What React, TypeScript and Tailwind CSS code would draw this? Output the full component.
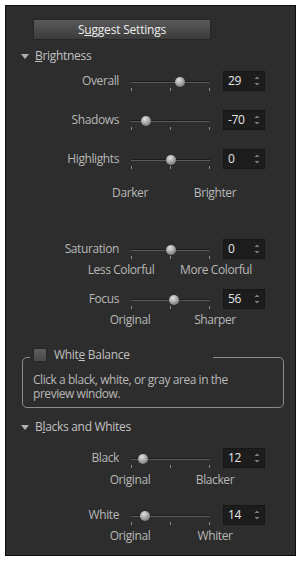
import React from 'react';

const font = { fontFamily: '"Open Sans", "Noto Sans", sans-serif' };

function Spinner() {
  return (
    <svg width="8" height="14" viewBox="0 0 8 14" className="shrink-0">
      <path d="M1.5 5 L4 2.5 L6.5 5 Z" fill="#808080" />
      <path d="M1.5 9 L4 11.5 L6.5 9 Z" fill="#808080" />
    </svg>
  );
}

function SliderRow({
  label,
  value,
  pos,
  className,
}: {
  label: string;
  value: string;
  pos: number;
  className?: string;
}) {
  return (
    <div className={`flex items-center h-[20px] ${className ?? ''}`}>
      <div className="w-[113px] text-right text-[12px] tracking-[-0.4px] text-[#b8b8b8] leading-[16px]">
        {label}
      </div>
      <div className="relative ml-[12px] w-[79px] h-[20px]">
        {/* track */}
        <div className="absolute left-0 right-0 top-[10px] h-[2px] bg-[#1c1c1c] border-b border-[#595959]" />
        {/* ticks */}
        <div className="absolute left-0 top-[17px] w-px h-[3px] bg-[#8a8a8a]" />
        <div className="absolute left-[39px] top-[17px] w-px h-[3px] bg-[#8a8a8a]" />
        <div className="absolute right-0 top-[17px] w-px h-[3px] bg-[#8a8a8a]" />
        {/* thumb */}
        <div
          className="absolute top-[6px] w-[10px] h-[10px] rounded-full bg-[radial-gradient(circle_at_40%_30%,#e2e2e2,#9a9a9a_55%,#5e5e5e)]"
          style={{ left: pos - 5 }}
        />
      </div>
      <div className="ml-[13px] w-[42px] h-[20px] bg-[#1c1c1c] border border-[#161616] flex items-center pl-[4px] pr-[3px]">
        <span className="flex-1 text-[12px] text-[#e6e6e6] tracking-[-0.3px] leading-[16px]">{value}</span>
        <Spinner />
      </div>
    </div>
  );
}

function Hints({
  left,
  right,
  leftStart = 95,
  className,
}: {
  left: string;
  right: string;
  leftStart?: number;
  className?: string;
}) {
  return (
    <div className={`flex h-[16px] text-[12px] tracking-[-0.4px] leading-[16px] text-[#b8b8b8] ${className ?? ''}`}>
      <div className="shrink-0" style={{ width: leftStart - 6 }} />
      <div className="w-[70px] text-center whitespace-nowrap">{left}</div>
      <div className="shrink-0" style={{ width: 180 - leftStart - 70 }} />
      <div className="w-[70px] text-center whitespace-nowrap">{right}</div>
    </div>
  );
}

function Header({ children, className }: { children: React.ReactNode; className?: string }) {
  return (
    <div className={`flex items-center h-[16px] pl-[15px] ${className ?? ''}`}>
      <svg width="8" height="5" viewBox="0 0 8 5" className="mr-[6px]">
        <path d="M0 0 L8 0 L4 5 Z" fill="#b0b0b0" />
      </svg>
      <span className="text-[12px] tracking-[-0.3px] leading-[16px] text-[#c2c2c2]">{children}</span>
    </div>
  );
}

export default function App() {
  return (
    <div className="w-[301px] h-[561px] bg-white p-[5px]" style={font}>
      <div className="h-[551px] w-[291px] border border-[#0e0e0e] bg-[#2d2d2d] flex flex-col">
        <button className="mt-[13px] ml-[27px] w-[178px] h-[21px] border border-[#262626] bg-gradient-to-b from-[#5a5a5a] to-[#3b3b3b] text-[12px] leading-[16px] text-[#ececec] tracking-[-0.2px]">
          S<span className="underline">u</span>ggest Settings
        </button>

        <Header className="mt-[8px]">
          <span className="underline">B</span>rightness
        </Header>

        <SliderRow className="mt-[7px]" label="Overall" value="29" pos={49} />
        <SliderRow className="mt-[19px]" label="Shadows" value="-70" pos={15} />
        <SliderRow className="mt-[19px]" label="Highlights" value="0" pos={40} />
        <Hints className="mt-[16px]" left="Darker" right="Brighter" />

        <SliderRow className="mt-[38px]" label="Saturation" value="0" pos={40} />
        <Hints className="mt-[3px]" left="Less Colorful" right="More Colorful" leftStart={86} />

        <SliderRow className="mt-[11px]" label="Focus" value="56" pos={43} />
        <Hints className="mt-[3px]" left="Original" right="Sharper" />

        <fieldset className="mt-[20px] ml-[16px] w-[262px] border border-[#8c8c8c] rounded-[5px] pl-[10px] pr-[8px] pb-[6px]">
          <legend className="-ml-[3px] w-[183px] h-[18px] flex items-start px-[3px]">
            <span className="w-[14px] h-[14px] border border-[#262626] bg-gradient-to-b from-[#5e5e5e] to-[#4a4a4a] shrink-0" />
            <span className="ml-[7px] text-[12px] tracking-[-0.3px] leading-[14px] text-[#c0c0c0]">
              Whit<span className="underline">e</span> Balance
            </span>
          </legend>
          <p className="w-[215px] pt-[7px] text-[12px] tracking-[-0.45px] leading-[14px] text-[#b8b8b8]">
            Click a black, white, or gray area in the preview window.
          </p>
        </fieldset>

        <Header className="mt-[11px]">
          B<span className="underline">l</span>acks and Whites
        </Header>

        <SliderRow className="mt-[13px]" label="Black" value="12" pos={12} />
        <Hints className="mt-[4px]" left="Original" right="Blacker" />
        <SliderRow className="mt-[17px]" label="White" value="14" pos={14} />
        <Hints className="mt-[3px]" left="Original" right="Whiter" />
      </div>
    </div>
  );
}
